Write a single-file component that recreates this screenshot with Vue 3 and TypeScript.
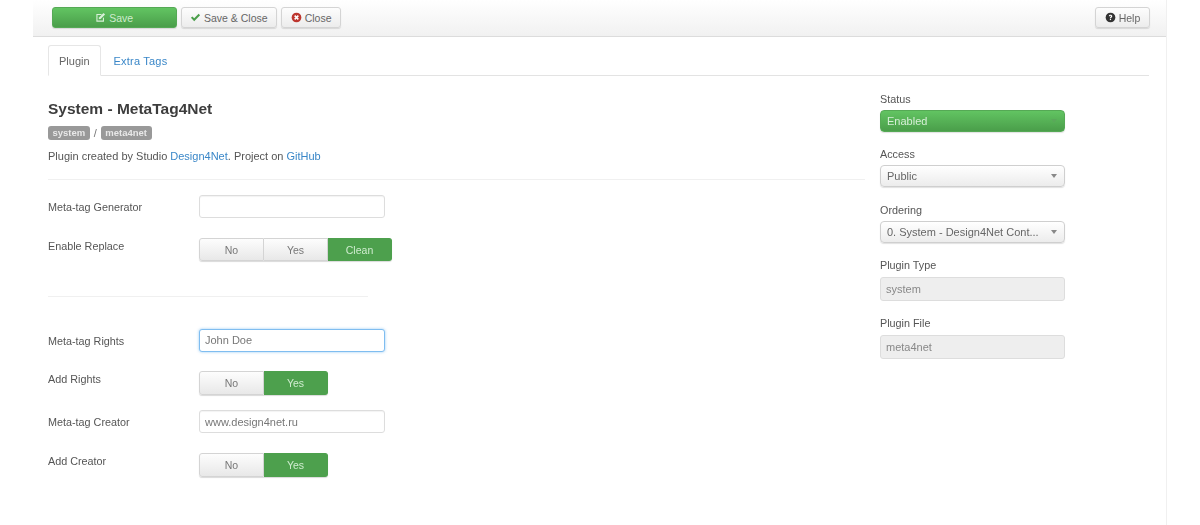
<script setup lang="ts">
interface SideField { label: string; kind: 'status' | 'choice' | 'fixed'; value: string }
const side: SideField[] = [
  { label: 'Status', kind: 'status', value: 'Enabled' },
  { label: 'Access', kind: 'choice', value: 'Public' },
  { label: 'Ordering', kind: 'choice', value: '0. System - Design4Net Cont...' },
  { label: 'Plugin Type', kind: 'fixed', value: 'system' },
  { label: 'Plugin File', kind: 'fixed', value: 'meta4net' }
]
</script>

<template>
  <div class="page">
    <header class="toolbar">
      <div class="tools">
        <button class="btn save">
          <svg class="ico" viewBox="0 0 12 12"><path d="M1.5 2.2h6.2L6.5 3.4H2.7v5.9h5.9V6.8l1.2-1.2v4.9H1.5z" fill="#d9f0d9"/><path d="M4.4 5.9 9.3 1l1.7 1.7L6.1 7.6l-2.1.4z" fill="#d9f0d9"/></svg>
          Save
        </button>
        <button class="btn">
          <svg class="ico" viewBox="0 0 12 12"><path d="M1 6.4 2.6 4.8 4.6 6.8 9.4 2 11 3.6 4.6 10z" fill="#4a9e4a"/></svg>
          Save &amp; Close
        </button>
        <button class="btn close">
          <svg class="ico" viewBox="0 0 12 12"><circle cx="6" cy="6" r="5.3" fill="#bd362f"/><path d="M4 4l4 4M8 4l-4 4" stroke="#fff" stroke-width="1.7"/></svg>
          Close
        </button>
      </div>
      <button class="btn help">
        <svg class="ico" viewBox="0 0 12 12"><circle cx="6" cy="6" r="5.3" fill="#333"/><path d="M4.2 4.7C4.3 3.6 5 3.1 6 3.1c1.1 0 1.9.6 1.9 1.5 0 1.400-1.300 1.200-1.300 2.200H5.300c0-1.700 1.200-1.500 1.200-2.200 0-.3-.2-.5-.6-.5-.4 0-.6.2-.7.6z" fill="#fff"/><rect x="5.300" y="7.500" width="1.300" height="1.300" fill="#fff"/></svg>
        Help
      </button>
    </header>

    <div class="content">
      <nav class="tabs">
        <a class="tab active">Plugin</a>
        <a class="tab link">Extra Tags</a>
      </nav>

      <div class="columns">
        <main class="main">
          <h1>System - MetaTag4Net</h1>
          <div class="badges"><span class="badge">system</span><span class="slash">/</span><span class="badge">meta4net</span></div>
          <p class="desc">Plugin created by Studio <a>Design4Net</a>. Project on <a>GitHub</a></p>
          <hr class="rule-full" />

          <div class="row first"><label>Meta-tag Generator</label><input class="input" type="text" /></div>
          <div class="row tall"><label>Enable Replace</label>
            <div class="toggle"><span>No</span><span>Yes</span><span class="on">Clean</span></div>
          </div>

          <hr class="rule-short" />

          <div class="row focused"><label>Meta-tag Rights</label><input class="input focus" type="text" value="John Doe" /></div>
          <div class="row tall"><label>Add Rights</label>
            <div class="toggle"><span>No</span><span class="on">Yes</span></div>
          </div>
          <div class="row"><label>Meta-tag Creator</label><input class="input" type="text" value="www.design4net.ru" /></div>
          <div class="row tall"><label>Add Creator</label>
            <div class="toggle"><span>No</span><span class="on">Yes</span></div>
          </div>
        </main>

        <aside class="side">
          <div v-for="f in side" :key="f.label" class="field" :class="`kind-${f.kind}`">
            <div class="side-label">{{ f.label }}</div>
            <div v-if="f.kind !== 'fixed'" class="select" :class="{ status: f.kind === 'status' }"><span>{{ f.value }}</span><i class="caret"></i></div>
            <div v-else class="readonly-box">{{ f.value }}</div>
          </div>
        </aside>
      </div>
    </div>
  </div>
</template>

<style>
html, body { margin: 0; background: #fff; }
</style>

<style scoped>
.page {
  width: 1167px;
  height: 525px;
  box-sizing: border-box;
  border-right: 1px solid #f0f0f0;
  font-family: "Liberation Sans", Arial, sans-serif;
  font-size: 11px;
  color: #555;
  overflow: hidden;
  filter: blur(0.35px);
}
.toolbar {
  margin-left: 33px;
  height: 37px;
  box-sizing: border-box;
  padding: 7px 16px 0 19px;
  display: flex;
  justify-content: space-between;
  align-items: flex-start;
  background: linear-gradient(#ffffff, #f1f1f1);
  border-bottom: 1px solid #dcdcdc;
}
.tools { display: flex; gap: 4.5px; }
.btn {
  height: 21px;
  box-sizing: border-box;
  padding: 0 8px;
  display: inline-flex;
  align-items: center;
  justify-content: center;
  gap: 3px;
  font-family: inherit;
  font-size: 10.5px;
  color: #666;
  background: linear-gradient(#fdfdfd, #ececec);
  border: 1px solid #d4d4d4;
  border-radius: 3px;
  box-shadow: 0 1px 1px rgba(0, 0, 0, .12);
}
.save {
  width: 124.5px;
  color: #cfeccf;
  background: linear-gradient(#62c462, #4a9e4a);
  border-color: #55a955;
}
.close { width: 60px; padding: 0; }
.help { width: 55px; padding: 0; }
.ico { width: 11px; height: 11px; flex: none; }

.content { padding: 8px 17px 0 48px; }
.tabs {
  display: flex;
  height: 31px;
  box-sizing: border-box;
  border-bottom: 1px solid #e3e3e3;
}
.tab {
  height: 31px;
  box-sizing: border-box;
  padding: 0 10px;
  line-height: 30px;
  color: #3a87c8;
  border: 1px solid transparent;
}
.tab.link { margin-left: 2px; letter-spacing: .2px; }
.tab.active {
  color: #666;
  background: #fff;
  border-color: #e6e6e6 #e6e6e6 #fff;
  border-radius: 3px 3px 0 0;
}

.columns { display: flex; }
.main { width: 817px; padding-top: 24px; }
h1 {
  margin: 0;
  font-size: 15.5px;
  line-height: 18px;
  font-weight: 700;
  color: #3d3d3d;
}
.badges { margin-top: 8px; height: 14px; display: flex; align-items: center; gap: 3px; }
.badge {
  height: 14px;
  padding: 0 4.5px;
  line-height: 14px;
  box-sizing: border-box;
  font-size: 9.5px;
  font-weight: 700;
  color: #e8e8e8;
  background: #999;
  border-radius: 3px;
}
.slash { color: #777; margin: 0 1px; }
.desc { margin: 10px 0 0; line-height: 13px; color: #555; }
.desc a { color: #3a87c8; }
hr { border: 0; border-top: 1px solid #f0f0f0; margin: 0; }
.rule-full { margin-top: 16px; }
.rule-short { width: 320px; margin: 35px 0 32px; }

.row { display: flex; align-items: flex-start; margin-top: 15.5px; height: 23px; }
.row.first { margin-top: 14.5px; }
.row.focused { height: 22px; }
.row.tall { margin-top: 20px; height: 23.5px; }
.row label { width: 151px; line-height: 24px; font-size: 10.8px; color: #555; }
.row.tall label { line-height: 17px; }
.input {
  width: 186px;
  height: 23px;
  box-sizing: border-box;
  padding: 0 5px;
  font: inherit;
  color: #777;
  background: #fff;
  border: 1px solid #ddd;
  border-radius: 3px;
  box-shadow: inset 0 1px 1px rgba(0, 0, 0, .05);
  outline: none;
}
.input.focus {
  height: 22.5px;
  border-color: #7fbdf0;
  box-shadow: 0 0 3px rgba(82, 168, 236, .6);
}
.toggle {
  display: flex;
  height: 23.5px;
  border-radius: 3px;
  box-shadow: 0 1px 1px rgba(0, 0, 0, .15);
}
.toggle span {
  width: 64px;
  box-sizing: border-box;
  text-align: center;
  line-height: 22px;
  font-size: 10.5px;
  color: #777;
  background: linear-gradient(#fdfdfd, #e8e8e8);
  border: 1px solid #d4d4d4;
  border-left-width: 0;
}
.toggle span:first-child { width: 65px; border-left-width: 1px; border-radius: 3px 0 0 3px; }
.toggle span:last-child { border-radius: 0 3px 3px 0; }
.toggle span.on {
  color: #cfeccf;
  background: #4da04d;
  border-color: #4da04d;
}

.side { margin-left: 15px; width: 185px; padding-top: 16.5px; }
.field { margin-bottom: 16.5px; }
.side-label { line-height: 13px; margin-bottom: 4px; font-size: 10.8px; color: #555; }
.kind-fixed { margin-bottom: 16px; }
.kind-fixed .side-label { margin-bottom: 5px; }
.select {
  height: 22px;
  box-sizing: border-box;
  padding: 0 7px 0 6px;
  display: flex;
  align-items: center;
  justify-content: space-between;
  color: #666;
  background: linear-gradient(#ffffff, #ececec);
  border: 1px solid #cfcfcf;
  border-radius: 4px;
  box-shadow: 0 1px 1px rgba(0, 0, 0, .12);
}
.select.status {
  color: #d6efd6;
  background: linear-gradient(#62c462, #4a9e4a);
  border-color: #55a955;
}
.caret {
  width: 0;
  height: 0;
  border: 3px solid transparent;
  border-top: 4px solid #888;
  border-bottom: 0;
}
.status .caret { border-top-color: #5aa95a; }
.readonly-box {
  height: 24px;
  box-sizing: border-box;
  padding: 0 5px;
  line-height: 22px;
  color: #888;
  background: #eee;
  border: 1px solid #ddd;
  border-radius: 3px;
}
</style>
